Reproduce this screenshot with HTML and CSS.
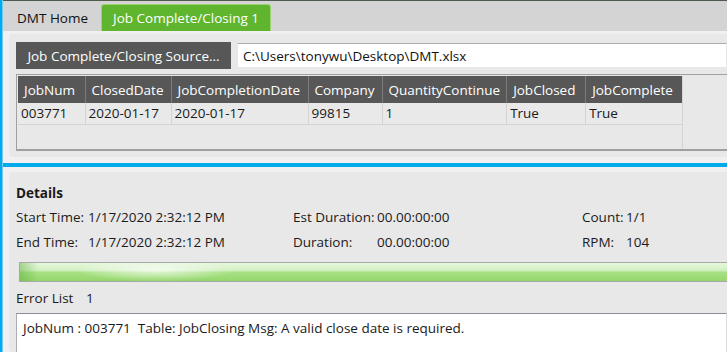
FILE: index.html
```html
<!DOCTYPE html>
<html lang="en">
<head>
  <meta charset="UTF-8" />
  <title>DMT - Job Complete/Closing</title>
  <link rel="stylesheet" href="styles.css">
</head>
<body>
  <div class="window">
    <div class="edge"></div>
    <div class="main">
      <nav class="tabs">
        <div class="tab">DMT Home</div>
        <div class="tab active">Job Complete/Closing 1</div>
      </nav>

      <section class="pane top-pane">
        <div class="card">
          <div class="source-row">
            <button class="source-btn">Job Complete/Closing Source...</button>
            <input class="path" type="text" value="C:\Users\tonywu\Desktop\DMT.xlsx">
          </div>

          <div class="grid">
            <div class="grid-body">
              <table>
                <thead>
                  <tr>
                    <th class="c1">JobNum</th>
                    <th class="c2">ClosedDate</th>
                    <th class="c3">JobCompletionDate</th>
                    <th class="c4">Company</th>
                    <th class="c5">QuantityContinue</th>
                    <th class="c6">JobClosed</th>
                    <th class="c7">JobComplete</th>
                  </tr>
                </thead>
                <tbody>
                  <tr>
                    <td>003771</td>
                    <td>2020-01-17</td>
                    <td>2020-01-17</td>
                    <td>99815</td>
                    <td>1</td>
                    <td>True</td>
                    <td>True</td>
                  </tr>
                </tbody>
              </table>
            </div>
          </div>
        </div>
      </section>

      <div class="splitter"><div class="splitter-bar"></div></div>

      <section class="pane bottom-pane">
        <div class="card details">
          <div class="title">Details</div>
          <div class="stats">
            <div><span class="lbl l1">Start Time:</span>1/17/2020 2:32:12 PM</div>
            <div><span class="lbl l2">Est Duration:</span>00.00:00:00</div>
            <div><span class="lbl l3">Count:</span>1/1</div>
            <div><span class="lbl l1">End Time:</span>1/17/2020 2:32:12 PM</div>
            <div><span class="lbl l2">Duration:</span>00.00:00:00</div>
            <div><span class="lbl l3">RPM:</span>104</div>
          </div>

          <div class="progress"><div class="progress-fill" style="width: 100%"></div></div>

          <div class="error-head"><span class="lbl l1">Error List</span>1</div>
          <div class="error-box">JobNum : 003771&nbsp; Table: JobClosing Msg: A valid close date is required.</div>
        </div>
      </section>
    </div>
  </div>
</body>
</html>
```

FILE: styles.css
```css
* {
  margin: 0;
  padding: 0;
  box-sizing: border-box;
}

body {
  font-family: 'Open Sans', 'Liberation Sans', sans-serif;
  font-size: 13.5px;
  color: #1a1a1a;
  background: #f0f0f0;
  overflow: hidden;
}

.window {
  display: flex;
  height: 352px;
}

.edge {
  width: 3px;
  background: #00aaeb;
  border-right: 1px solid #6fcbef;
}

.main {
  flex: 1;
  display: flex;
  flex-direction: column;
  overflow: hidden;
}

.main > * {
  flex-shrink: 0;
}

/* tab strip */
.tabs {
  height: 31px;
  display: flex;
  align-items: flex-end;
  gap: 2px;
  padding-left: 4px;
  background: #d4d4d4;
  border-top: 1px solid #4d5a4d;
}

.tab {
  height: 26px;
  line-height: 26px;
  padding: 0 10px;
  color: #111;
}

.active {
  height: 27px;
  margin-left: 1px;
  padding: 0 11px;
  background: #5fb52e;
  border: 1px solid #9ad370;
  border-bottom: none;
  border-radius: 3px 3px 0 0;
  color: #fff;
}

/* panes */
.pane {
  background: #f0f0f0;
  padding-left: 6px;
}

.top-pane {
  padding-top: 3px;
  height: 126px;
}

.card {
  height: 100%;
  background: #e8e8e8;
  border-radius: 4px 0 0 4px;
  padding: 8px 0 0 7px;
}

.source-row {
  display: flex;
  align-items: center;
  gap: 6px;
}

.source-btn {
  width: 215px;
  height: 27px;
  border: none;
  background: #575757;
  color: #fff;
  font: inherit;
}

.path {
  flex: 1;
  height: 25px;
  padding: 0 5px;
  border: 1px solid #e2e8ee;
  border-top-color: #abadb3;
  font: inherit;
  color: #111;
  background: #fff;
}

/* data grid */
.grid {
  margin-top: 5px;
  height: 77px;
  border-top: 1px solid #a0a0a0;
  border-left: 1px solid #a0a0a0;
  border-bottom: 2px solid #a0a0a0;
  padding: 1px 0 0 1px;
  background: #e8e8e8;
}

.grid-body {
  display: inline-block;
  height: 100%;
  border-right: 1px solid #d4d4d4;
}

table {
  border-collapse: collapse;
  table-layout: fixed;
}

th {
  height: 27px;
  padding: 0 6px;
  background: #575757;
  color: #fff;
  font-weight: normal;
  text-align: left;
  white-space: nowrap;
  border-right: 1px solid #7c7c7c;
}

th:last-child {
  border-right: none;
}

td {
  height: 21px;
  padding: 0 3px;
  background: #e9e9e9;
  border-right: 1px solid #d4d4d4;
  border-bottom: 1px solid #d4d4d4;
}

td:last-child {
  border-right: none;
}

.c1 { width: 67px; }
.c2 { width: 86px; }
.c3 { width: 137px; }
.c4 { width: 74px; }
.c5 { width: 124px; }
.c6 { width: 79px; }
.c7 { width: 96px; }

/* splitter */
.splitter {
  padding: 6px 0 5px;
  background: #f0f0f0;
}

.splitter-bar {
  height: 4px;
  background: #00aaeb;
}

/* details */
.bottom-pane {
  flex: 1;
  flex-shrink: 1;
  min-height: 0;
  overflow: hidden;
}

.details {
  padding-top: 9px;
}

.title {
  line-height: 24px;
  font-weight: bold;
}

.stats {
  display: grid;
  grid-template-columns: 277px 289px 1fr;
  line-height: 25px;
}

.lbl {
  display: inline-block;
  white-space: nowrap;
}

.l1 { width: 72px; }
.l2 { width: 84px; }
.l3 { width: 44px; }

.progress {
  margin: 7px 0 0 3px;
  height: 20px;
  border: 1px solid #a8a8a8;
  border-right: none;
  background: #e6e6e6;
}

.progress-fill {
  height: 100%;
  background:
    radial-gradient(ellipse 80px 11px at 135px 40%, rgba(255, 255, 255, 0.7), rgba(255, 255, 255, 0)),
    linear-gradient(to right, rgba(90, 170, 60, 0.45), rgba(90, 170, 60, 0) 18px),
    linear-gradient(#e6f8dc 0%, #d2f0c2 40%, #a8e185 52%, #95d76c 100%);
}

.error-head {
  margin-top: 6px;
  line-height: 20px;
}

.error-head .l1 {
  width: 70px;
}

.error-box {
  margin-top: 5px;
  height: 60px;
  padding: 5px 6px;
  line-height: 18px;
  background: #fff;
  border: 1px solid #d9dde3;
  border-top-color: #8a8e96;
  border-left-color: #abadb3;
}
```
